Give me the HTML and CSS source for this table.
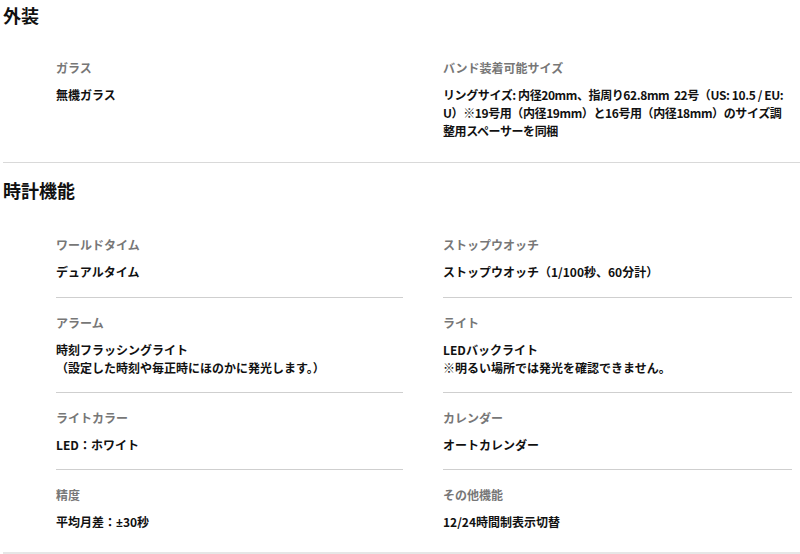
FILE: index.html
```html
<!DOCTYPE html>
<html lang="ja">
<head>
<meta charset="utf-8">
<title>Spec</title>
<link rel="stylesheet" href="styles.css">
</head>
<body>
<div class="page">
  <section class="section section-first">
    <h2 class="section-title">外装</h2>
    <div class="spec-grid">
      <div class="spec-item">
        <div class="spec-label">ガラス</div>
        <div class="spec-value">無機ガラス</div>
      </div>
      <div class="spec-item">
        <div class="spec-label">バンド装着可能サイズ</div>
        <div class="spec-value spec-value-tight">リングサイズ: 内径20mm、指周り62.8mm&nbsp; 22号（US: 10.5 / EU:<br>U）※19号用（内径19mm）と16号用（内径18mm）のサイズ調<br>整用スペーサーを同梱</div>
      </div>
    </div>
  </section>
  <section class="section section-last">
    <h2 class="section-title">時計機能</h2>
    <div class="spec-grid">
      <div class="spec-item">
        <div class="spec-label">ワールドタイム</div>
        <div class="spec-value">デュアルタイム</div>
      </div>
      <div class="spec-item">
        <div class="spec-label">ストップウオッチ</div>
        <div class="spec-value">ストップウオッチ（1/100秒、60分計）</div>
      </div>
      <div class="spec-item">
        <div class="spec-label">アラーム</div>
        <div class="spec-value">時刻フラッシングライト<br>（設定した時刻や毎正時にほのかに発光します。）</div>
      </div>
      <div class="spec-item">
        <div class="spec-label">ライト</div>
        <div class="spec-value">LEDバックライト<br>※明るい場所では発光を確認できません。</div>
      </div>
      <div class="spec-item">
        <div class="spec-label">ライトカラー</div>
        <div class="spec-value">LED：ホワイト</div>
      </div>
      <div class="spec-item">
        <div class="spec-label">カレンダー</div>
        <div class="spec-value">オートカレンダー</div>
      </div>
      <div class="spec-item">
        <div class="spec-label">精度</div>
        <div class="spec-value">平均月差：<span class="latin">±</span>30秒</div>
      </div>
      <div class="spec-item">
        <div class="spec-label">その他機能</div>
        <div class="spec-value">12/24時間制表示切替</div>
      </div>
    </div>
  </section>
</div>
</body>
</html>
```

FILE: styles.css
```css
html, body {
  margin: 0;
  padding: 0;
  background: #ffffff;
}

body {
  font-family: "Noto Sans CJK JP", "Noto Sans", sans-serif;
  color: #111111;
}

.page {
  padding-left: 3px;
}

.section {
  padding: 17px 8px 4px 0;
  border-bottom: 1px solid #d9d9d9;
}

.section-first {
  padding-top: 5px;
  padding-bottom: 6px;
}

.section-first .spec-grid {
  margin-top: 18px;
}

.section-last {
  padding-bottom: 5px;
  border-bottom: 2px solid #e6e6e6;
}

.section-title {
  margin: 0;
  font-size: 18px;
  line-height: 20px;
  font-weight: 700;
  color: #111111;
}

.spec-grid {
  display: grid;
  grid-template-columns: 347px 349px;
  column-gap: 40px;
  margin: 20px 0 0 53px;
}

.spec-item {
  padding: 16px 0 15px;
  border-bottom: 1px solid #cfcfcf;
}

.spec-item:first-child,
.spec-item:nth-child(2) {
  padding-bottom: 16px;
}

.spec-item:nth-last-child(-n+2) {
  border-bottom: none;
}

.spec-label {
  font-size: 12px;
  line-height: 18px;
  font-weight: 700;
  color: #777777;
}

.spec-value {
  margin-top: 9px;
  font-size: 12px;
  line-height: 18px;
  font-weight: 700;
  color: #111111;
}

.spec-value-tight {
  white-space: nowrap;
  letter-spacing: -0.4px;
}

.latin {
  font-family: "Noto Sans", sans-serif;
}
```
